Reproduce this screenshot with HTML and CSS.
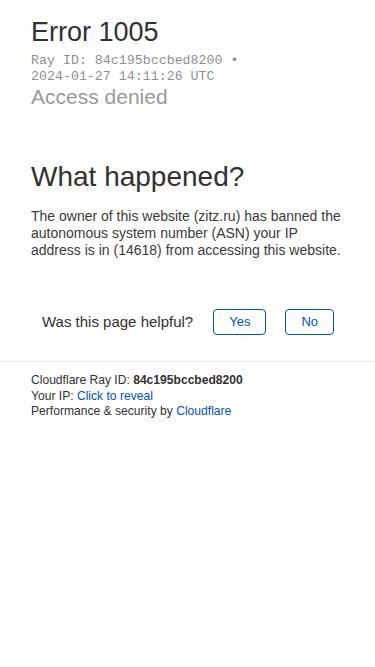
FILE: index.html
```html
<!DOCTYPE html>
<html lang="en">
<head>
<meta charset="utf-8">
<meta name="viewport" content="width=device-width, initial-scale=1">
<title>Access denied | zitz.ru used Cloudflare to restrict access</title>
<link rel="stylesheet" href="styles.css">
</head>
<body>
  <main class="content">
    <header class="error-header">
      <h1 class="error-title">Error 1005</h1>
      <div class="ray-meta">Ray ID: 84c195bccbed8200 &bull;<br>2024-01-27 14:11:26 UTC</div>
      <h2 class="error-subtitle">Access denied</h2>
    </header>

    <section class="details">
      <h2 class="section-title">What happened?</h2>
      <p class="section-text">The owner of this website (zitz.ru) has banned the autonomous system number (ASN) your IP address is in (14618) from accessing this website.</p>
    </section>

    <div class="feedback">
      <span class="feedback-question">Was this page helpful?</span>
      <button class="feedback-btn" type="button">Yes</button>
      <button class="feedback-btn" type="button">No</button>
    </div>
  </main>

  <footer class="footer">
    <p class="footer-line">Cloudflare Ray ID: <strong class="footer-strong">84c195bccbed8200</strong></p>
    <p class="footer-line">Your IP: <a class="footer-link" href="#">Click to reveal</a></p>
    <p class="footer-line">Performance &amp; security by <a class="footer-link" href="#">Cloudflare</a></p>
  </footer>
</body>
</html>
```

FILE: styles.css
```css
* {
  box-sizing: border-box;
}

html, body {
  margin: 0;
  padding: 0;
  background: #ffffff;
}

body {
  font-family: "Liberation Sans", Arial, Helvetica, sans-serif;
  color: #313131;
  -webkit-font-smoothing: antialiased;
}

.content {
  padding: 17px 31px 0;
}

.error-header {
  display: flex;
  flex-direction: column;
}

.error-title {
  margin: 0;
  font-size: 27px;
  line-height: 31px;
  font-weight: 400;
  color: #313131;
}

.ray-meta {
  margin-top: 5px;
  font-family: "Liberation Mono", "Courier New", monospace;
  font-size: 13.3px;
  line-height: 16px;
  color: #8f8f8f;
}

.error-subtitle {
  margin: 0;
  font-size: 21px;
  line-height: 24px;
  font-weight: 400;
  color: #999999;
}

.details {
  margin-top: 52px;
}

.section-title {
  margin: 0;
  font-size: 28px;
  line-height: 32px;
  font-weight: 400;
  color: #313131;
}

.section-text {
  margin: 15px 0 0;
  font-size: 14px;
  line-height: 17px;
  color: #3a3a3a;
}

.feedback {
  margin-top: 50px;
  display: flex;
  align-items: center;
  justify-content: center;
  gap: 19px;
  padding-left: 1px;
}

.feedback-question {
  font-size: 15px;
  line-height: 18px;
  color: #313131;
  margin-right: 1px;
}

.feedback-btn {
  height: 26px;
  padding: 0 15px;
  border: 1px solid #0051c3;
  border-radius: 4px;
  background: #ffffff;
  color: #0051c3;
  font-family: "Liberation Sans", Arial, Helvetica, sans-serif;
  font-size: 13px;
  line-height: 24px;
  cursor: pointer;
}

.footer {
  margin-top: 26px;
  border-top: 1px solid #e6e6e6;
  padding: 11px 31px 0;
}

.footer-line {
  margin: 0;
  font-size: 12.1px;
  line-height: 15.7px;
  color: #313131;
}

.footer-strong {
  font-weight: 700;
}

.footer-link {
  color: #0051c3;
  text-decoration: none;
}
```
